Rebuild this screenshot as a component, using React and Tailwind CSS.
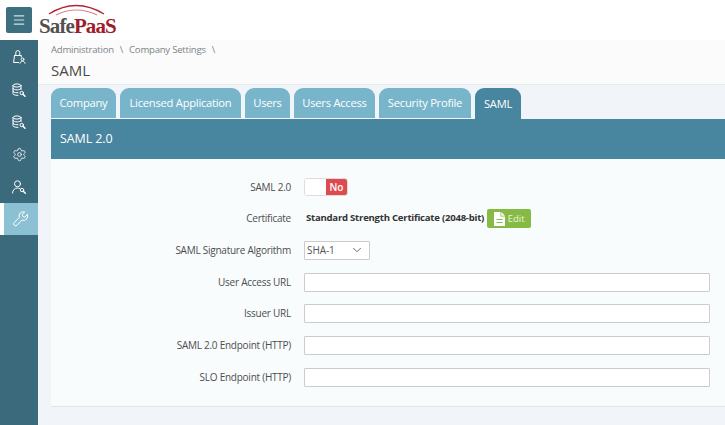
import React from 'react';
import { Menu, ChevronDown, Settings } from 'lucide-react';

const font = "font-['Open_Sans','Noto_Sans',sans-serif]";

const tabs = [
  { label: 'Company', width: 'w-[65px]' },
  { label: 'Licensed Application', width: 'w-[121px]' },
  { label: 'Users', width: 'w-[45px]' },
  { label: 'Users Access', width: 'w-[81px]' },
  { label: 'Security Profile', width: 'w-[92px]' },
  { label: 'SAML', width: 'w-[46px]', active: true },
];

const urlFields = ['User Access URL', 'Issuer URL', 'SAML 2.0 Endpoint (HTTP)', 'SLO Endpoint (HTTP)'];

function LockUserIcon() {
  return (
    <svg width="16" height="16" viewBox="0 0 16 16" fill="none" stroke="currentColor" strokeWidth="1" strokeLinecap="round" strokeLinejoin="round">
      <path d="M3.5 6.5h6.5M3.5 6.5 2.6 13.5h5M10 6.5l.3 1.5" />
      <path d="M4.8 6.5V3.6a2 2 0 0 1 4 0v2.9" />
      <circle cx="11.5" cy="10.3" r="1.4" />
      <path d="M9 14.3c.2-1.4 1.2-2 2.5-2s2.3.6 2.5 2" />
    </svg>
  );
}

function DatabaseSearchIcon() {
  return (
    <svg width="16" height="16" viewBox="0 0 16 16" fill="none" stroke="currentColor" strokeWidth="1" strokeLinecap="round" strokeLinejoin="round">
      <ellipse cx="6" cy="3.5" rx="4" ry="1.6" />
      <path d="M2 3.5v8.2c0 .9 1.8 1.6 4 1.6h1M10 3.5v4M2 6.3c0 .9 1.8 1.6 4 1.6s4-.7 4-1.6M2 9.1c0 .9 1.8 1.6 4 1.6h1" />
      <circle cx="10.7" cy="11" r="1.7" />
      <path d="m12 12.3 2 2" strokeWidth="1.5" />
    </svg>
  );
}

function UserSearchIcon() {
  return (
    <svg width="16" height="16" viewBox="0 0 16 16" fill="none" stroke="currentColor" strokeWidth="1" strokeLinecap="round" strokeLinejoin="round">
      <circle cx="6.5" cy="4.8" r="3" />
      <path d="M1.5 14c.3-3 2.2-5 5-5 .8 0 1.5.2 2.1.5" />
      <circle cx="11" cy="11" r="1.7" />
      <path d="m12.3 12.3 2 2" strokeWidth="1.5" />
    </svg>
  );
}

function WrenchIcon() {
  return (
    <svg width="16" height="16" viewBox="0 0 24 24" fill="none" stroke="currentColor" strokeWidth="1.5" strokeLinecap="round" strokeLinejoin="round">
      <path d="M21.5 5.5 17.8 9.2l-3-1-1-3L17.5 1.6a6.2 6.2 0 0 0-8 8L1.9 17.2a2.9 2.9 0 0 0 4.1 4.1l7.6-7.6a6.2 6.2 0 0 0 7.9-8.2z" />
    </svg>
  );
}

// solid page with a folded corner and two cut-out lines
function PageIcon() {
  return (
    <svg width="11" height="14" viewBox="0 0 11 14">
      <path d="M0 0h6.5v4.5H11V14H0z" fill="#ffffff" />
      <path d="M7.3 0 11 3.7H7.3z" fill="#ffffff" />
      <path d="M2.5 7.5h6M2.5 10.5h6" stroke="#85bb45" strokeWidth="1" />
    </svg>
  );
}

function Logo() {
  return (
    <div className="relative h-[40px] w-[80px] ml-[7px]">
      <svg className="absolute left-[8px] top-[4px]" width="60" height="13" viewBox="0 0 60 13" fill="none">
        <path d="M2 10Q29 -7 57 10" stroke="#b5202f" strokeWidth="1.3" />
        <path d="M9 11Q29 1 50 11" stroke="#d9848c" strokeWidth="1.2" />
      </svg>
      <div className="absolute left-0 top-[14px] font-['Liberation_Serif',serif] font-bold text-[21px] leading-[24px] tracking-[-0.9px] whitespace-nowrap">
        <span className="text-[#55504f]">Safe</span>
        <span className="text-[#a01c2b]">PaaS</span>
      </div>
    </div>
  );
}

function SideItem({ active, children }) {
  return (
    <div className={`h-[32.4px] flex items-center justify-center ${active ? 'bg-[#8cc1d3] border-l-4 border-white text-white' : 'text-white'}`}>
      {children}
    </div>
  );
}

function FormRow({ label, children }) {
  return (
    <div className="flex items-center h-[20px]">
      <div className="w-[240px] text-right text-[10px] tracking-[-0.25px] text-[#4d4d4d]">{label}</div>
      <div className="ml-[13px] flex-1 flex items-center">{children}</div>
    </div>
  );
}

export default function App() {
  return (
    <div className={`${font} w-[725px] h-[425px] overflow-hidden bg-white flex flex-col`}>
      {/* Top bar */}
      <div className="h-[40px] shrink-0 flex items-start bg-white">
        <button className="mt-[7px] ml-[6px] w-[26px] h-[26px] rounded-[2px] bg-[#3c6f80] flex items-center justify-center text-[#d5e2e6]">
          <Menu size={14} strokeWidth={2} />
        </button>
        <Logo />
      </div>

      <div className="flex-1 flex min-h-0">
        {/* Sidebar */}
        <div className="w-[38px] shrink-0 bg-[#3b6a7c] pt-[1px] flex flex-col">
          <SideItem><LockUserIcon /></SideItem>
          <SideItem><DatabaseSearchIcon /></SideItem>
          <SideItem><DatabaseSearchIcon /></SideItem>
          <SideItem><Settings size={15} strokeWidth={1.3} /></SideItem>
          <SideItem><UserSearchIcon /></SideItem>
          <SideItem active><WrenchIcon /></SideItem>
        </div>

        <div className="flex-1 bg-[#f1f5f9] flex flex-col min-w-0">
          {/* Breadcrumb */}
          <div className="h-[45px] shrink-0 bg-[#fbfbfb] border-b border-[#e6edf1] pl-[13px] pt-[3px]">
            <div className="flex items-center text-[9.6px] tracking-[-0.25px] leading-[14px] text-[#7d8488]">
              <span>Administration</span>
              <span className="mx-[6px]">\</span>
              <span>Company Settings</span>
              <span className="mx-[6px]">\</span>
            </div>
            <div className="mt-[3px] text-[15px] leading-[20px] text-[#4a4a4a]">SAML</div>
          </div>

          <div className="pl-[13px] pt-[3px]">
            {/* Tabs */}
            <div className="flex gap-[4px] h-[31px]">
              {tabs.map((tab) => (
                <div
                  key={tab.label}
                  className={`${tab.width} pt-[1px] rounded-t-[9px] text-white text-[11.2px] tracking-[-0.25px] flex items-center justify-center whitespace-nowrap ${tab.active ? 'h-[31px] bg-[#48859e]' : 'h-[30px] bg-[#78b5ca]'}`}
                >
                  {tab.label}
                </div>
              ))}
            </div>

            {/* Panel */}
            <div className="h-[40px] pt-[1px] bg-[#48859e] flex items-center pl-[9px] text-white text-[12.5px] tracking-[-0.1px]">SAML 2.0</div>
            <div className="h-[248px] bg-[#f9fcfd] border-b border-[#dfe6ea] pt-[18px] pr-[15px] flex flex-col gap-[11.7px]">
              <FormRow label="SAML 2.0">
                <div className="flex h-[18px] w-[44px] rounded-[3px] border border-[#dddddd] bg-white overflow-hidden">
                  <div className="w-[21px] bg-white" />
                  <div className="flex-1 bg-[#dd4b4f] text-white text-[10px] font-semibold flex items-center justify-center">No</div>
                </div>
              </FormRow>
              <FormRow label="Certificate">
                <span className="ml-[2px] text-[9.6px] tracking-[-0.25px] font-bold text-[#333333] whitespace-nowrap">Standard Strength Certificate (2048-bit)</span>
                <button className="ml-[3px] h-[19px] w-[44px] rounded-[2px] bg-[#85bb45] text-[#e8f3da] text-[9.5px] flex items-center justify-center gap-[3px]">
                  <PageIcon />
                  Edit
                </button>
              </FormRow>
              <FormRow label="SAML Signature Algorithm">
                <div className="h-[19px] w-[66px] bg-white border border-[#cccccc] rounded-[1px] flex items-center justify-between pl-[2px] pr-[5px] text-[10px] tracking-[-0.1px] text-[#555555]">
                  SHA-1
                  <ChevronDown size={14} strokeWidth={1.5} />
                </div>
              </FormRow>
              {urlFields.map((label) => (
                <FormRow key={label} label={label}>
                  <input className="w-full h-[19px] bg-white border border-[#cccccc] rounded-[1px]" />
                </FormRow>
              ))}
            </div>
          </div>
        </div>
      </div>
    </div>
  );
}
